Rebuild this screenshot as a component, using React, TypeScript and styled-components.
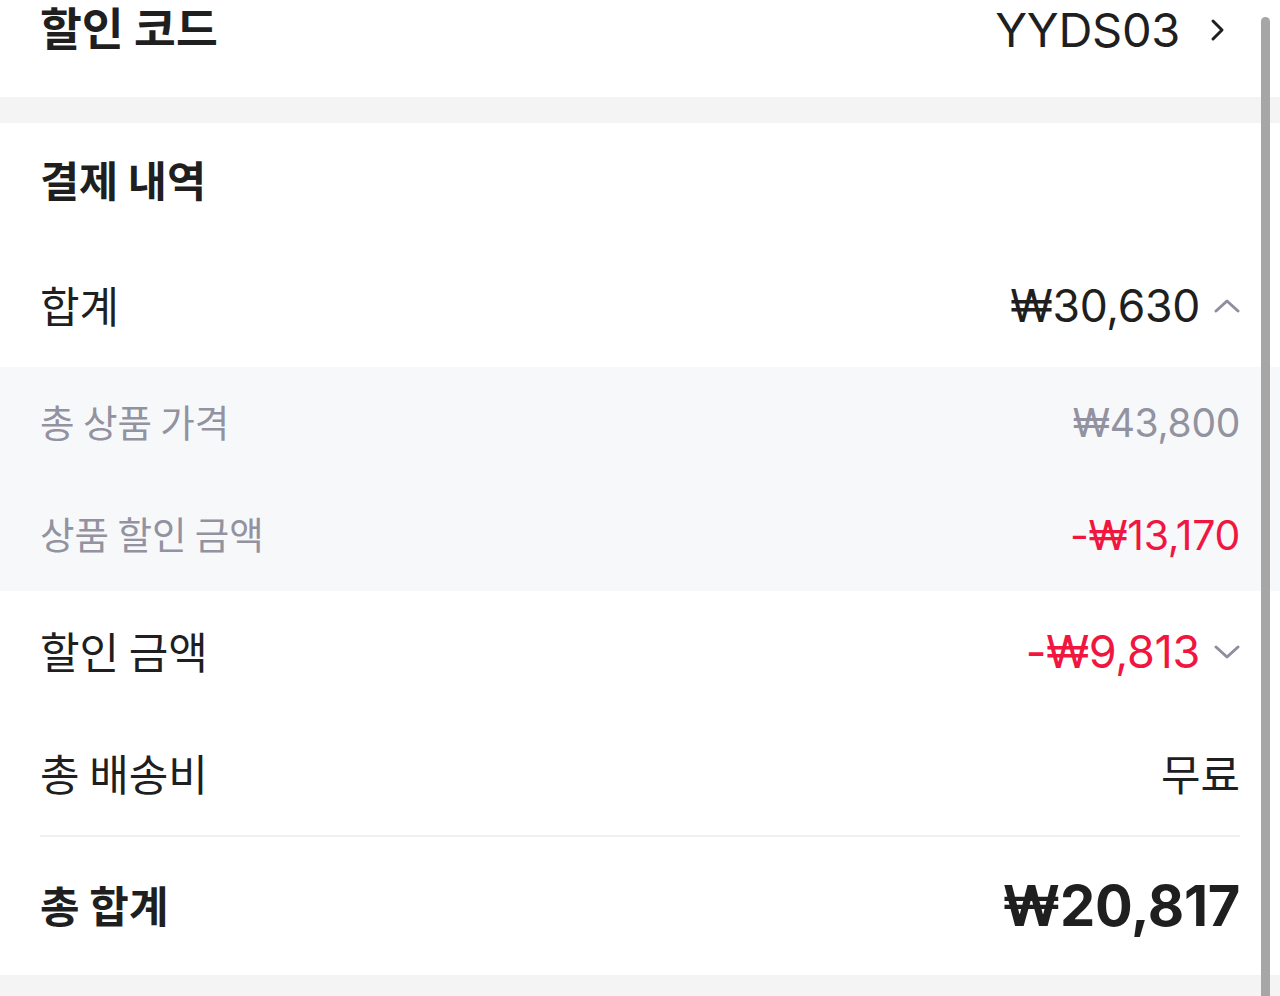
import React from "react";
import styled, { createGlobalStyle } from "styled-components";

const Global = createGlobalStyle`
  html, body { margin: 0; padding: 0; background: #ffffff; }
  body { font-family: "Inter", "Noto Sans CJK KR", sans-serif; color: #1f1f1f; overflow: hidden; }
`;

const Page = styled.div`
  position: relative;
  width: 1280px;
  height: 996px;
  overflow: hidden;
  background: #ffffff;
  display: flex;
  flex-direction: column;
`;

const Gap = styled.div<{ $h: number }>`
  height: ${(p) => p.$h}px;
  background: #f4f4f4;
  flex-shrink: 0;
`;

const Section = styled.div`
  background: #ffffff;
  display: flex;
  flex-direction: column;
`;

const Row = styled.div<{ $h: number; $lift?: number }>`
  height: ${(p) => p.$h}px;
  padding: 0 40px ${(p) => p.$lift ?? 0}px;
  display: flex;
  align-items: center;
  justify-content: space-between;
  box-sizing: border-box;
  flex-shrink: 0;
`;

const TopRow = styled(Row)`
  align-items: flex-start;
  padding-top: 2px;
`;

const SubPanel = styled.div`
  background: #f7f8fa;
  display: flex;
  flex-direction: column;
`;

const Label = styled.span<{ $bold?: boolean; $sub?: boolean; $size?: number }>`
  font-family: "Noto Sans CJK KR", sans-serif;
  font-size: ${(p) => p.$size ?? (p.$sub ? 37.5 : 43)}px;
  font-weight: ${(p) => (p.$bold ? 700 : 400)};
  color: ${(p) => (p.$sub ? "#9292a0" : "#1f1f1f")};
  line-height: 56px;
  margin-top: -4px;
`;

const Value = styled.span<{ $tone?: "dark" | "red" | "gray"; $size?: number; $bold?: boolean }>`
  font-family: "Inter", "Noto Sans", "Noto Sans CJK KR", sans-serif;
  font-size: ${(p) => p.$size ?? 44.5}px;
  font-weight: ${(p) => (p.$bold ? 700 : 400)};
  color: ${(p) =>
    p.$tone === "red" ? "#f0163f" : p.$tone === "gray" ? "#9292a0" : "#1f1f1f"};
  line-height: 56px;
  letter-spacing: -0.3px;
`;

const ValueWrap = styled.div<{ $gap?: number; $end?: number }>`
  display: flex;
  align-items: center;
  gap: ${(p) => p.$gap ?? 14}px;
  margin-right: ${(p) => p.$end ?? 0}px;
`;

const KoValue = styled.span`
  font-family: "Noto Sans CJK KR", sans-serif;
  font-size: 43px;
  color: #1f1f1f;
  line-height: 56px;
  margin-top: -4px;
`;

const Divider = styled.div`
  height: 2px;
  margin: 0 40px;
  background: #f0f0f0;
  flex-shrink: 0;
`;

const ScrollThumb = styled.div`
  position: absolute;
  left: 1261px;
  top: 17px;
  width: 9px;
  bottom: 0;
  background: #a6a6a6;
  border-radius: 5px 5px 0 0;
`;

const Chevron = ({ dir, color = "#8e8ea0" }: { dir: "up" | "down" | "right"; color?: string }) => {
  if (dir === "right") {
    return (
      <svg width="16" height="26" viewBox="0 0 16 26" fill="none">
        <path d="M3 4 L12 13 L3 22" stroke="#1f1f1f" strokeWidth="3" strokeLinecap="round" strokeLinejoin="round" />
      </svg>
    );
  }
  return (
    <svg width="26" height="16" viewBox="0 0 26 16" fill="none">
      <path
        d={dir === "up" ? "M2 13 L13 3 L24 13" : "M2 3 L13 13 L24 3"}
        stroke={color}
        strokeWidth="3"
        strokeLinecap="round"
        strokeLinejoin="round"
      />
    </svg>
  );
};

export default function App() {
  return (
    <Page>
      <Global />
      <TopRow $h={97}>
        <Label $bold $size={45.5}>할인 코드</Label>
        <ValueWrap $gap={30} $end={14}>
          <Value $size={47}>YYDS03</Value>
          <Chevron dir="right" />
        </ValueWrap>
      </TopRow>
      <Gap $h={26} />
      <Section>
        <Row $h={121} $lift={6}>
          <Label $bold $size={42.5}>결제 내역</Label>
        </Row>
        <Row $h={123}>
          <Label>합계</Label>
          <ValueWrap>
            <Value>₩30,630</Value>
            <Chevron dir="up" />
          </ValueWrap>
        </Row>
        <SubPanel>
          <Row $h={112}>
            <Label $sub>총 상품 가격</Label>
            <Value $tone="gray" $size={39}>₩43,800</Value>
          </Row>
          <Row $h={112}>
            <Label $sub>상품 할인 금액</Label>
            <Value $tone="red" $size={41}>-₩13,170</Value>
          </Row>
        </SubPanel>
        <Row $h={122}>
          <Label>할인 금액</Label>
          <ValueWrap>
            <Value $tone="red" $size={45}>-₩9,813</Value>
            <Chevron dir="down" />
          </ValueWrap>
        </Row>
        <Row $h={122}>
          <Label>총 배송비</Label>
          <KoValue>무료</KoValue>
        </Row>
        <Divider />
        <Row $h={138}>
          <Label $bold>총 합계</Label>
          <Value $bold $size={56}>₩20,817</Value>
        </Row>
      </Section>
      <Gap $h={40} />
      <ScrollThumb />
    </Page>
  );
}
